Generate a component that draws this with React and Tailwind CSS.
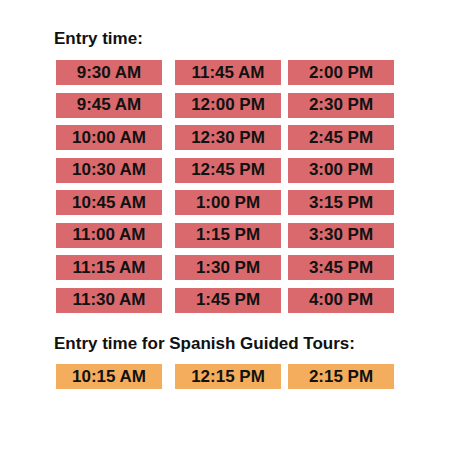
const entryTimes = [
    ['9:30 AM', '11:45 AM', '2:00 PM'],
    ['9:45 AM', '12:00 PM', '2:30 PM'],
    ['10:00 AM', '12:30 PM', '2:45 PM'],
    ['10:30 AM', '12:45 PM', '3:00 PM'],
    ['10:45 AM', '1:00 PM', '3:15 PM'],
    ['11:00 AM', '1:15 PM', '3:30 PM'],
    ['11:15 AM', '1:30 PM', '3:45 PM'],
    ['11:30 AM', '1:45 PM', '4:00 PM'],
];

const spanishTimes = ['10:15 AM', '12:15 PM', '2:15 PM'];

function TimeRow({ times, color }) {
    return (
        <div className="flex h-[25px]">
            {times.map((time, i) => (
                <div
                    key={time}
                    className={`w-[106px] h-full flex items-center justify-center text-[17px] font-bold text-[#111] ${color} ${
                        i === 1 ? 'ml-[13px]' : i === 2 ? 'ml-[7px]' : ''
                    }`}
                >
                    {time}
                </div>
            ))}
        </div>
    );
}

export default function App() {
    return (
        <div
            className="w-[450px] h-[450px] bg-white pt-[29px]"
            style={{ fontFamily: '"Liberation Sans", Arial, sans-serif' }}
        >
            <h2 className="pl-[54px] text-[17px] leading-[20px] font-bold text-[#111]">Entry time:</h2>
            <div className="pl-[56px] mt-[11px] flex flex-col gap-[7.5px]">
                {entryTimes.map((row) => (
                    <TimeRow key={row[0]} times={row} color="bg-[#d9696c]" />
                ))}
            </div>

            <h2 className="pl-[54px] mt-[21px] text-[17px] leading-[20px] font-bold text-[#111]">
                Entry time for Spanish Guided Tours:
            </h2>
            <div className="pl-[56px] mt-[10.5px]">
                <TimeRow times={spanishTimes} color="bg-[#f4ad5c]" />
            </div>
        </div>
    );
}
